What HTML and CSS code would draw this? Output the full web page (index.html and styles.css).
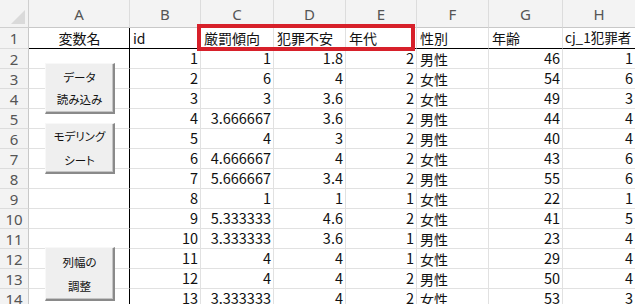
FILE: index.html
```html
<!DOCTYPE html>
<html lang="ja">
<head>
<meta charset="utf-8">
<link rel="stylesheet" href="styles.css">
</head>
<body>
<div class="wrap">
  <div class="sheet">
    <div class="corner"><span class="tri"></span></div>
    <div class="hd colA">A</div><div class="hd">B</div><div class="hd">C</div><div class="hd">D</div><div class="hd">E</div><div class="hd">F</div><div class="hd">G</div><div class="hd">H</div>

    <div class="rh">1</div>
    <div class="c r1 colA ctr">変数名</div><div class="c r1 txt">id</div><div class="c r1 txt">厳罰傾向</div><div class="c r1 txt">犯罪不安</div><div class="c r1 txt">年代</div><div class="c r1 txt">性別</div><div class="c r1 txt">年齢</div><div class="c r1 txt tight">cj_1犯罪者</div>

    <div class="rh">2</div>
    <div class="c colA"></div><div class="c num">1</div><div class="c num">1</div><div class="c num">1.8</div><div class="c num">2</div><div class="c txt">男性</div><div class="c num">46</div><div class="c num">1</div>
    <div class="rh">3</div>
    <div class="c colA"></div><div class="c num">2</div><div class="c num">6</div><div class="c num">4</div><div class="c num">2</div><div class="c txt">女性</div><div class="c num">54</div><div class="c num">6</div>
    <div class="rh">4</div>
    <div class="c colA"></div><div class="c num">3</div><div class="c num">3</div><div class="c num">3.6</div><div class="c num">2</div><div class="c txt">女性</div><div class="c num">49</div><div class="c num">3</div>
    <div class="rh">5</div>
    <div class="c colA"></div><div class="c num">4</div><div class="c num">3.666667</div><div class="c num">3.6</div><div class="c num">2</div><div class="c txt">男性</div><div class="c num">44</div><div class="c num">4</div>
    <div class="rh">6</div>
    <div class="c colA"></div><div class="c num">5</div><div class="c num">4</div><div class="c num">3</div><div class="c num">2</div><div class="c txt">男性</div><div class="c num">40</div><div class="c num">4</div>
    <div class="rh">7</div>
    <div class="c colA"></div><div class="c num">6</div><div class="c num">4.666667</div><div class="c num">4</div><div class="c num">2</div><div class="c txt">女性</div><div class="c num">43</div><div class="c num">6</div>
    <div class="rh">8</div>
    <div class="c colA"></div><div class="c num">7</div><div class="c num">5.666667</div><div class="c num">3.4</div><div class="c num">2</div><div class="c txt">男性</div><div class="c num">55</div><div class="c num">6</div>
    <div class="rh">9</div>
    <div class="c colA"></div><div class="c num">8</div><div class="c num">1</div><div class="c num">1</div><div class="c num">1</div><div class="c txt">女性</div><div class="c num">22</div><div class="c num">1</div>
    <div class="rh">10</div>
    <div class="c colA"></div><div class="c num">9</div><div class="c num">5.333333</div><div class="c num">4.6</div><div class="c num">2</div><div class="c txt">女性</div><div class="c num">41</div><div class="c num">5</div>
    <div class="rh">11</div>
    <div class="c colA"></div><div class="c num">10</div><div class="c num">3.333333</div><div class="c num">3.6</div><div class="c num">1</div><div class="c txt">男性</div><div class="c num">23</div><div class="c num">4</div>
    <div class="rh">12</div>
    <div class="c colA"></div><div class="c num">11</div><div class="c num">4</div><div class="c num">4</div><div class="c num">1</div><div class="c txt">女性</div><div class="c num">29</div><div class="c num">4</div>
    <div class="rh">13</div>
    <div class="c colA"></div><div class="c num">12</div><div class="c num">4</div><div class="c num">4</div><div class="c num">2</div><div class="c txt">男性</div><div class="c num">50</div><div class="c num">4</div>
    <div class="rh">14</div>
    <div class="c colA"></div><div class="c num">13</div><div class="c num">3.333333</div><div class="c num">4</div><div class="c num">2</div><div class="c txt">女性</div><div class="c num">53</div><div class="c num">3</div>
  </div>

  <div class="btn btn1"><span>データ</span><span>読み込み</span></div>
  <div class="btn btn2"><span>モデリング</span><span>シート</span></div>
  <div class="btn btn3"><span>列幅の</span><span>調整</span></div>

  <div class="mark"></div>
</div>
</body>
</html>
```

FILE: styles.css
```css
html, body {
  margin: 0;
  padding: 0;
  background: #ffffff;
  overflow: hidden;
}

.wrap {
  position: relative;
  width: 635px;
  height: 304px;
  overflow: hidden;
  font-family: "Noto Sans CJK JP", "Noto Sans", sans-serif;
}

.sheet {
  display: grid;
  grid-template-columns: 29px 101px 71px 73px 72px 71px 72px 74px 73px;
  grid-template-rows: 28px 21px repeat(13, 20px);
  width: 636px;
}

.corner {
  position: relative;
  background: #f3f3f3;
  border-right: 1px solid #cfcfcf;
  border-bottom: 1px solid #cfcfcf;
  box-sizing: border-box;
}

.tri {
  position: absolute;
  right: 3px;
  bottom: 3px;
  width: 0;
  height: 0;
  border-left: 14px solid transparent;
  border-bottom: 14px solid #dadada;
}

.hd {
  background: #f3f3f3;
  border-right: 1px solid #dcdcdc;
  border-bottom: 1px solid #c8c8c8;
  box-sizing: border-box;
  display: flex;
  align-items: center;
  justify-content: center;
  font-family: "Noto Sans", "Open Sans", sans-serif;
  font-size: 15px;
  color: #555555;
  padding-top: 1px;
}

.rh {
  background: #f3f3f3;
  border-right: 1px solid #c8c8c8;
  border-bottom: 1px solid #dcdcdc;
  box-sizing: border-box;
  display: flex;
  align-items: center;
  justify-content: center;
  font-family: "Noto Sans", "Open Sans", sans-serif;
  font-size: 15px;
  color: #555555;
}

.c {
  border-right: 1px solid #e1e1e1;
  border-bottom: 1px solid #e1e1e1;
  box-sizing: border-box;
  display: flex;
  align-items: center;
  font-size: 14.5px;
  color: #111111;
  white-space: nowrap;
  overflow: visible;
  padding: 0 2px 0 3px;
  line-height: 1;
}

.c.colA {
  border-right: 1px solid #000000;
}

.c.r1 {
  border-bottom: 1px solid #000000;
}

.num {
  justify-content: flex-end;
}

.txt {
  justify-content: flex-start;
  font-size: 14px;
}

.ctr {
  justify-content: center;
  font-size: 14px;
}

.tight {
  padding-left: 2px;
  font-size: 13.5px;
}

.btn {
  position: absolute;
  left: 45px;
  width: 70px;
  box-sizing: border-box;
  background: #efefef;
  border-top: 1px solid #f8f8f8;
  border-left: 1px solid #f8f8f8;
  border-right: 2px solid #8a8a8a;
  border-bottom: 2px solid #8a8a8a;
  box-shadow: inset -1px -1px 0 #c4c4c4;
  display: flex;
  flex-direction: column;
  align-items: center;
  justify-content: center;
  font-size: 11.5px;
  font-feature-settings: "palt";
  color: #111111;
  line-height: 22px;
}

.btn1 {
  top: 63px;
  height: 51px;
}

.btn2 {
  top: 123px;
  height: 51px;
  line-height: 24px;
}

.btn3 {
  top: 247px;
  height: 54px;
  line-height: 24px;
}

.mark {
  position: absolute;
  left: 197px;
  top: 24px;
  width: 218px;
  height: 27px;
  box-sizing: border-box;
  border: 4px solid #d7202a;
}
```
